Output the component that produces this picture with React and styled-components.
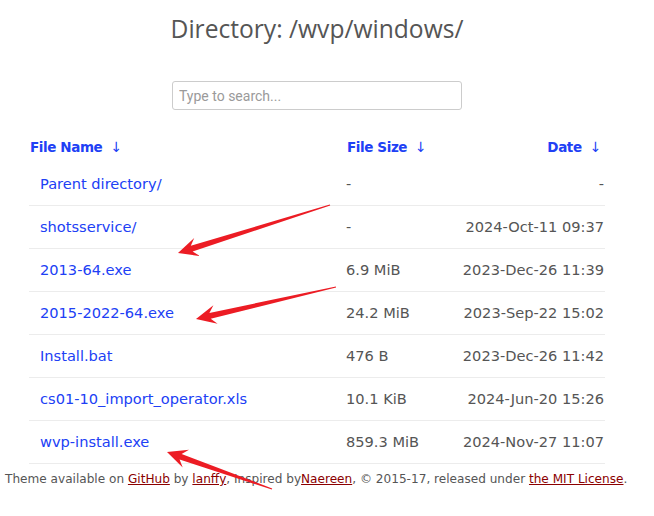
import React from "react";
import styled, { createGlobalStyle } from "styled-components";

const GlobalStyle = createGlobalStyle`
    html, body {
        margin: 0;
        padding: 0;
        background: #fff;
    }
    body {
        font-family: "DejaVu Sans", Verdana, sans-serif;
        color: #555;
    }
`;

const Page = styled.div`
    position: relative;
    width: 654px;
    min-height: 516px;
`;

const Centered = styled.div`
    width: 634px;
`;

const Title = styled.h1`
    margin: 0;
    padding-top: 12px;
    height: 33px;
    text-align: center;
    font-family: "Open Sans", sans-serif;
    font-weight: 400;
    font-size: 24.6px;
    line-height: 33px;
    color: #555;
`;

const SearchRow = styled.div`
    display: flex;
    justify-content: center;
    padding-top: 36px;
`;

const Search = styled.input`
    box-sizing: border-box;
    width: 290px;
    height: 29px;
    padding: 0 6px;
    border: 1px solid #ccc;
    border-radius: 3px;
    font-family: Roboto, sans-serif;
    font-size: 14px;
    color: #555;
    outline: none;

    &::placeholder {
        color: #9a9a9a;
    }
`;

const Table = styled.div`
    width: 576px;
    margin: 20px 0 0 29px;
`;

const Row = styled.div`
    display: grid;
    grid-template-columns: 317px 1fr auto;
    align-items: center;
    height: ${(p) => (p.$head ? "33px" : "40px")};
    padding-bottom: ${(p) => (p.$head ? "0" : "2px")};
    border-bottom: ${(p) => (p.$head ? "none" : "1px solid #ececec")};
    font-size: 14.6px;
    white-space: nowrap;
`;

const HeadCell = styled.a`
    padding-left: 1px;
    font-size: 13.5px;
    letter-spacing: -0.4px;
    font-weight: 700;
    color: #2040f5;
    text-decoration: none;
    text-align: ${(p) => (p.$right ? "right" : "left")};
    padding-right: ${(p) => (p.$right ? "4px" : "0")};

    span {
        font-weight: 400;
        font-size: 14px;
        margin-left: 8px;
    }
`;

const NameCell = styled.a`
    padding-left: 11px;
    color: #2040f5;
    text-decoration: none;
`;

const Cell = styled.div`
    color: #555;
    text-align: ${(p) => (p.$right ? "right" : "left")};
    padding-right: ${(p) => (p.$right ? "1px" : "0")};
`;

const Footer = styled.div`
    padding: 7px 0 0 5px;
    font-size: 12.1px;
    line-height: 16px;
    color: #555;
    white-space: nowrap;

    a {
        color: #8b0000;
        text-decoration: underline;
    }
`;

const Overlay = styled.svg`
    position: absolute;
    left: 0;
    top: 0;
    pointer-events: none;
`;

const files = [
    {name: "Parent directory/", size: "-", date: "-"},
    {name: "shotsservice/", size: "-", date: "2024-Oct-11 09:37"},
    {name: "2013-64.exe", size: "6.9 MiB", date: "2023-Dec-26 11:39"},
    {name: "2015-2022-64.exe", size: "24.2 MiB", date: "2023-Sep-22 15:02"},
    {name: "Install.bat", size: "476 B", date: "2023-Dec-26 11:42"},
    {name: "cs01-10_import_operator.xls", size: "10.1 KiB", date: "2024-Jun-20 15:26"},
    {name: "wvp-install.exe", size: "859.3 MiB", date: "2024-Nov-27 11:07"},
];

// tapered annotation arrow, like the ones a screenshot tool draws
const arrowPoints = (tail, tip, headLen = 20, headHalf = 9.5, shaft = 3) => {
    const dx = tip[0] - tail[0];
    const dy = tip[1] - tail[1];
    const len = Math.hypot(dx, dy);
    const ux = dx / len, uy = dy / len;
    const nx = -uy, ny = ux;
    const base = [tip[0] - ux * headLen, tip[1] - uy * headLen];
    const neck = [tip[0] - ux * headLen * 0.72, tip[1] - uy * headLen * 0.72];
    const pts = [
        [tail[0] + nx * 0.6, tail[1] + ny * 0.6],
        [neck[0] + nx * shaft, neck[1] + ny * shaft],
        [base[0] + nx * headHalf, base[1] + ny * headHalf],
        tip,
        [base[0] - nx * headHalf, base[1] - ny * headHalf],
        [neck[0] - nx * shaft, neck[1] - ny * shaft],
        [tail[0] - nx * 0.6, tail[1] - ny * 0.6],
    ];
    return pts.map((p) => p.map((v) => v.toFixed(1)).join(",")).join(" ");
};

const arrows = [
    {tail: [330, 205], tip: [178, 253]},
    {tail: [336, 287], tip: [196, 319]},
    {tail: [272, 489], tip: [167, 452]},
];

const App = () => {
    return (
        <Page>
            <GlobalStyle/>
            <Centered>
                <Title>Directory: /wvp/windows/</Title>
                <SearchRow>
                    <Search type="text" placeholder="Type to search..."/>
                </SearchRow>
            </Centered>
            <Table>
                <Row $head>
                    <HeadCell href="#">File Name<span>↓</span></HeadCell>
                    <HeadCell href="#">File Size<span>↓</span></HeadCell>
                    <HeadCell href="#" $right>Date<span>↓</span></HeadCell>
                </Row>
                {files.map((f) => (
                    <Row key={f.name}>
                        <NameCell href="#">{f.name}</NameCell>
                        <Cell>{f.size}</Cell>
                        <Cell $right>{f.date}</Cell>
                    </Row>
                ))}
            </Table>
            <Footer>
                Theme available on <a href="#">GitHub</a> by <a href="#">lanffy</a>, Inspired by<a href="#">Naereen</a>, © 2015-17, released under <a href="#">the MIT License</a>.
            </Footer>
            <Overlay width="654" height="516" viewBox="0 0 654 516">
                {arrows.map((a, i) => (
                    <polygon key={i} points={arrowPoints(a.tail, a.tip)} fill="#ec1c24"/>
                ))}
            </Overlay>
        </Page>
    );
};

export default App;
